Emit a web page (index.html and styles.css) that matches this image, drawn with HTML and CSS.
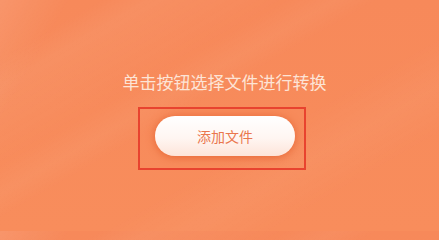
FILE: index.html
```html
<!DOCTYPE html>
<html lang="zh-CN">
<head>
<meta charset="utf-8">
<title>添加文件</title>
<link rel="stylesheet" href="styles.css">
</head>
<body>
<main class="stage">
  <p class="hint">单击按钮选择文件进行转换</p>
  <div class="btn-wrap">
    <button class="add-btn" type="button">添加文件</button>
    <span class="highlight"></span>
  </div>
</main>
</body>
</html>
```

FILE: styles.css
```css
html, body {
  margin: 0;
  padding: 0;
}
body {
  width: 439px;
  height: 231px;
  overflow: hidden;
  font-family: "Noto Sans CJK SC", "Noto Sans", sans-serif;
  background-color: #f7895a;
  background-image:
    linear-gradient(120deg, rgba(255,255,255,0.10) 0px, rgba(255,255,255,0) 60px),
    linear-gradient(-30deg, rgba(255,255,255,0) 55%, rgba(255,255,255,0.04) 60%, rgba(255,255,255,0) 66%, rgba(255,255,255,0.05) 82%, rgba(255,255,255,0) 88%),
    linear-gradient(-30deg, rgba(255,255,255,0) 20%, rgba(255,255,255,0.04) 30%, rgba(255,255,255,0) 40%),
    linear-gradient(180deg, #f7895a, #f88d5c);
}
.stage {
  display: flex;
  flex-direction: column;
  align-items: center;
  padding: 73px 0 0 10px;
  box-sizing: border-box;
  height: 231px;
}
.hint {
  margin: 0;
  font-size: 17px;
  line-height: 17px;
  color: #fde4d6;
  letter-spacing: 0;
}
.btn-wrap {
  position: relative;
  margin-top: 26px;
  margin-left: 1px;
}
.add-btn {
  display: block;
  width: 140px;
  height: 40px;
  border: none;
  border-radius: 20px;
  background: linear-gradient(180deg, #ffffff 0%, #fff6f2 55%, #fde4d9 100%);
  box-shadow: 0 1px 9px rgba(220, 80, 30, 0.65);
  color: #ea774e;
  font-family: "Noto Sans CJK SC", "Noto Sans", sans-serif;
  font-size: 14px;
  padding: 0;
}
.highlight {
  position: absolute;
  left: -17.5px;
  top: -9.5px;
  width: 168.5px;
  height: 63.5px;
  box-sizing: border-box;
  border: 2px solid #e8432f;
  pointer-events: none;
}
```
